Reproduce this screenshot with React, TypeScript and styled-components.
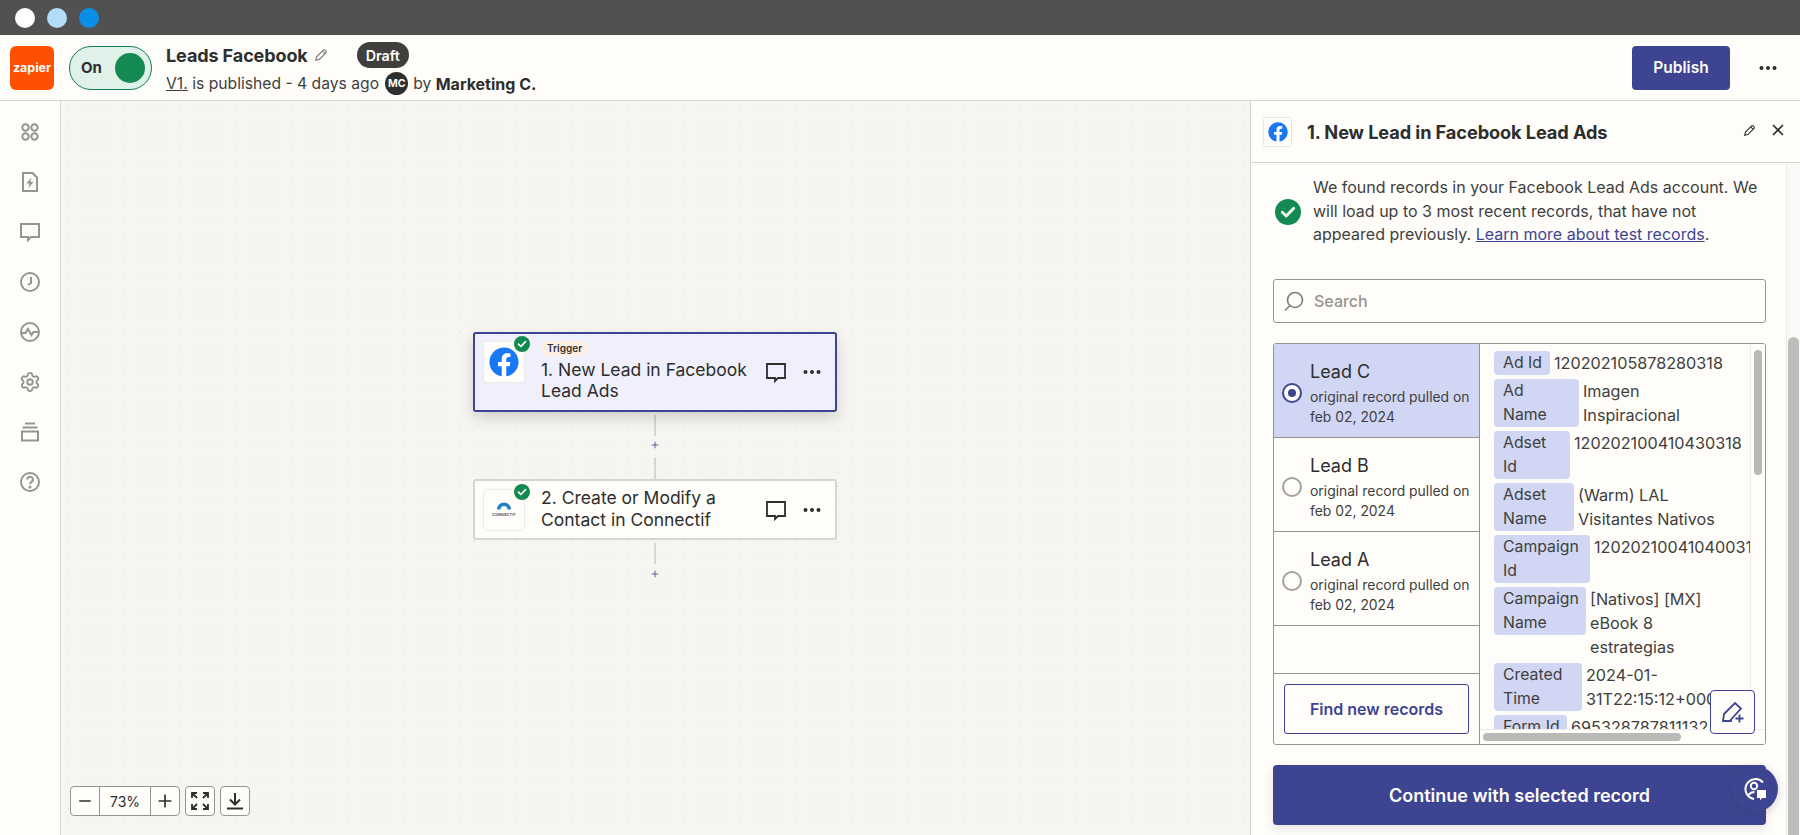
import styled, { createGlobalStyle } from "styled-components";
import { FaFacebook } from "react-icons/fa";
import { Minus, Plus, Settings, X } from "lucide-react";

const GlobalStyle = createGlobalStyle`
  html, body { margin: 0; padding: 0; height: 100%; }
  body { font-family: Inter, "Liberation Sans", sans-serif; color: #2d2e2e; background: #fffdf9; }
  * { box-sizing: border-box; }
`;

const navy = "#3d4592";
const lavender = "#d0d6f3";

const Page = styled.div`
  width: 100%;
  height: 100vh;
  display: flex;
  flex-direction: column;
  overflow: hidden;
`;

const TitleBar = styled.div`
  height: 35px;
  flex: none;
  background: #515151;
  display: flex;
  align-items: center;
  gap: 12px;
  padding-left: 15px;
`;

const WindowDot = styled.span<{ $color: string }>`
  width: 20px;
  height: 20px;
  border-radius: 50%;
  background: ${({ $color }) => $color};
`;

const Header = styled.header`
  height: 66px;
  flex: none;
  display: flex;
  align-items: center;
  padding: 0 22px 0 10px;
  background: #fffdf9;
  border-bottom: 1px solid #d6d5d0;
`;

const ZapierLogo = styled.div`
  width: 44px;
  height: 44px;
  border-radius: 6px;
  background: #ff4f00;
  color: #fffdf9;
  display: flex;
  align-items: center;
  justify-content: center;
  font-size: 12.5px;
  font-weight: 700;
`;

const Toggle = styled.div`
  width: 83px;
  height: 44px;
  margin-left: 15px;
  border-radius: 22px;
  border: 1px solid #13804d;
  background: #e0f1ea;
  display: flex;
  align-items: center;
  justify-content: space-between;
  padding: 0 6px 0 11px;
  font-size: 15px;
  font-weight: 700;
`;

const ToggleKnob = styled.span`
  width: 30px;
  height: 30px;
  border-radius: 50%;
  background: #138a50;
`;

const ZapInfo = styled.div`
  margin: 2px 0 0 14px;
  display: flex;
  flex-direction: column;
  gap: 4px;
`;

const ZapTitleRow = styled.div`
  display: flex;
  align-items: center;
  height: 26px;
`;

const ZapTitle = styled.h1`
  margin: 0;
  font-size: 18px;
  font-weight: 700;
  letter-spacing: -0.1px;
`;

const TitlePencil = styled.span`
  display: inline-flex;
  margin-left: 6px;
  color: #7c7b76;
`;

const DraftBadge = styled.span`
  margin-left: 29px;
  height: 26px;
  padding: 0 9px;
  display: inline-flex;
  align-items: center;
  border-radius: 13px;
  background: #403f3e;
  color: #fffdf9;
  font-size: 14.3px;
  font-weight: 600;
`;

const ZapMeta = styled.div`
  display: flex;
  align-items: center;
  font-size: 15.7px;
  color: #403f3e;
  white-space: pre;
`;

const VersionLink = styled.span`
  text-decoration: underline;
`;

const Avatar = styled.span`
  width: 23px;
  height: 23px;
  margin: 0 5px 0 6px;
  border-radius: 50%;
  background: #2d2e2e;
  color: #fffdf9;
  display: inline-flex;
  align-items: center;
  justify-content: center;
  font-size: 10.5px;
  font-weight: 700;
`;

const Author = styled.strong`
  font-size: 16px;
  font-weight: 700;
  color: #2d2e2e;
`;

const HeaderActions = styled.div`
  margin-left: auto;
  display: flex;
  align-items: center;
  gap: 28px;
`;

const PublishButton = styled.button`
  width: 98px;
  height: 44px;
  border: none;
  border-radius: 4px;
  background: ${navy};
  color: #fffdf9;
  font: 600 15.5px Inter, sans-serif;
`;

const Body = styled.div`
  flex: 1;
  min-height: 0;
  display: flex;
`;

const Sidebar = styled.nav`
  width: 61px;
  flex: none;
  border-right: 1px solid #d6d5d0;
  background: #fffdf9;
  display: flex;
  flex-direction: column;
  align-items: center;
  gap: 28px;
  padding-top: 20px;
  color: #95948f;
`;

const SideIcon = styled.span`
  width: 22px;
  height: 22px;
  display: flex;
`;

const Canvas = styled.main`
  flex: 1;
  position: relative;
  background-color: #f6f5f2;
  background-image: radial-gradient(#edece8 0.8px, transparent 0.9px);
  background-size: 14px 14px;
  display: flex;
  flex-direction: column;
  padding: 231px 0 0 412px;
`;

const NodeCard = styled.div<{ $active?: boolean }>`
  position: relative;
  width: 364px;
  height: ${({ $active }) => ($active ? "80px" : "61px")};
  display: flex;
  align-items: center;
  padding: 0 13px 0 8px;
  border-radius: 3px;
  border: 2px solid ${({ $active }) => ($active ? navy : "#d6d5d0")};
  background: ${({ $active }) => ($active ? "#eff0fb" : "#fffdf9")};
  box-shadow: ${({ $active }) => ($active ? "0 6px 14px rgba(45, 46, 46, 0.18)" : "none")};
`;

const AppBox = styled.div<{ $raised?: boolean }>`
  position: relative;
  width: 42px;
  height: 42px;
  flex: none;
  align-self: ${({ $raised }) => ($raised ? "flex-start" : "center")};
  margin-top: ${({ $raised }) => ($raised ? "7px" : "0")};
  border-radius: 4px;
  border: 1px solid #ecebe6;
  background: #fffdf9;
  display: flex;
  align-items: center;
  justify-content: center;
`;

const CheckBadge = styled.span`
  position: absolute;
  top: -6px;
  right: -6px;
  display: flex;
`;

const NodeText = styled.div`
  margin: 0 0 2px 16px;
  flex: 1;
  display: flex;
  flex-direction: column;
  align-items: flex-start;
`;

const TriggerTag = styled.span`
  height: 15px;
  padding: 0 6px;
  margin-bottom: 3px;
  border-radius: 8px;
  background: #fdf0e3;
  font-size: 10px;
  font-weight: 600;
  line-height: 15px;
`;

const NodeTitle = styled.div`
  font-size: 17.5px;
  line-height: 21.5px;
  color: #2d2e2e;
`;

const NodeActions = styled.div`
  display: flex;
  align-items: center;
  gap: 15px;
  color: #2d2e2e;
`;

const Connector = styled.div`
  width: 364px;
  height: 67px;
  display: flex;
  flex-direction: column;
  align-items: center;
  color: ${navy};
`;

const ConnectorLine = styled.span`
  width: 2px;
  height: 21px;
  margin-top: 3px;
  background: #d6d5d0;
`;

const ConnectorPlus = styled.span`
  height: 20px;
  display: flex;
  align-items: center;
  justify-content: center;
`;

const ZoomControls = styled.div`
  position: absolute;
  left: 9px;
  bottom: 19px;
  display: flex;
  gap: 5px;
`;

const ZoomGroup = styled.div`
  display: flex;
  height: 30px;
  border: 1px solid #95948f;
  border-radius: 4px;
  background: #fffdf9;
`;

const ZoomCell = styled.div<{ $width: number; $divided?: boolean }>`
  width: ${({ $width }) => $width}px;
  display: flex;
  align-items: center;
  justify-content: center;
  font-size: 14px;
  color: #2d2e2e;
  border-left: ${({ $divided }) => ($divided ? "1px solid #95948f" : "none")};
`;

const Panel = styled.aside`
  position: relative;
  width: 550px;
  flex: none;
  display: flex;
  flex-direction: column;
  background: #fffdf9;
  border-left: 1px solid #d6d5d0;
`;

const PanelHeader = styled.div`
  height: 62px;
  flex: none;
  display: flex;
  align-items: center;
  padding: 0 13px 0 12px;
  border-bottom: 1px solid #d6d5d0;
`;

const PanelAppBox = styled.div`
  width: 29px;
  height: 30px;
  border: 1px solid #e6e5e0;
  border-radius: 3px;
  display: flex;
  align-items: center;
  justify-content: center;
`;

const PanelTitle = styled.h2`
  margin: 0 0 0 15px;
  font-size: 18.2px;
  font-weight: 700;
  letter-spacing: -0.1px;
`;

const PanelHeaderActions = styled.div`
  margin: 0 0 3px auto;
  display: flex;
  align-items: center;
  gap: 13px;
`;

const PanelBody = styled.div`
  flex: 1;
  min-height: 0;
  padding: 12px 34px 0 22px;
`;

const Message = styled.div`
  display: flex;
  align-items: center;
  gap: 12px;
  padding: 1px 0 0 2px;
`;

const MessageText = styled.p`
  margin: 0;
  font-size: 16px;
  line-height: 23.7px;
  color: #403f3e;
  white-space: nowrap;
`;

const LearnLink = styled.a`
  color: ${navy};
  text-decoration: underline;
`;

const SearchBox = styled.div`
  height: 44px;
  margin-top: 32px;
  display: flex;
  align-items: center;
  gap: 8px;
  padding-left: 6px;
  border: 1px solid #95948f;
  border-radius: 3px;
  color: #95948f;
  font-size: 16px;
  font-weight: 500;
`;

const Records = styled.div`
  height: 402px;
  margin-top: 20px;
  display: grid;
  grid-template-columns: 206px 1fr;
  border: 1px solid #95948f;
  border-radius: 3px;
  overflow: hidden;
`;

const LeadColumn = styled.div`
  display: flex;
  flex-direction: column;
  border-right: 1px solid #95948f;
`;

const LeadRow = styled.div<{ $selected?: boolean }>`
  height: 94px;
  flex: none;
  display: flex;
  align-items: center;
  gap: 8px;
  padding: 0 8px;
  border-bottom: 1px solid #95948f;
  background: ${({ $selected }) => ($selected ? lavender : "transparent")};
`;

const Radio = styled.span<{ $selected?: boolean }>`
  width: 20px;
  height: 20px;
  flex: none;
  margin-top: 4px;
  border-radius: 50%;
  border: 2px solid ${({ $selected }) => ($selected ? navy : "#a3a29d")};
  background: #fffdf9;
  display: flex;
  align-items: center;
  justify-content: center;
  &::after {
    content: "";
    display: ${({ $selected }) => ($selected ? "block" : "none")};
    width: 8px;
    height: 8px;
    border-radius: 50%;
    background: ${navy};
  }
`;

const LeadText = styled.div`
  margin-top: 6px;
`;

const LeadName = styled.div`
  font-size: 18px;
  line-height: 24px;
  margin-bottom: 3px;
  color: #2d2e2e;
`;

const LeadNote = styled.div`
  font-size: 13.9px;
  line-height: 20px;
  color: #403f3e;
  white-space: nowrap;
`;

const EmptyRow = styled.div`
  height: 48px;
  flex: none;
  border-bottom: 1px solid #95948f;
`;

const FindRow = styled.div`
  flex: 1;
  display: flex;
  align-items: center;
  justify-content: center;
`;

const FindButton = styled.button`
  width: 185px;
  height: 50px;
  border: 1px solid ${navy};
  border-radius: 3px;
  background: transparent;
  color: ${navy};
  font: 600 16px Inter, sans-serif;
`;

const FieldsPane = styled.div`
  position: relative;
  overflow: hidden;
`;

const FieldList = styled.div`
  display: flex;
  flex-direction: column;
  gap: 4px;
  padding: 7px 0 0 14px;
  width: 400px;
`;

const FieldRow = styled.div`
  display: flex;
  align-items: flex-start;
  gap: 4px;
`;

const FieldKey = styled.div<{ $width: number }>`
  width: ${({ $width }) => $width}px;
  flex: none;
  padding: 0 9px;
  border-radius: 4px;
  background: ${lavender};
  font-size: 15.8px;
  line-height: 24px;
  color: #403f3e;
  white-space: nowrap;
`;

const FieldValue = styled.div`
  font-size: 16.2px;
  line-height: 24px;
  color: #403f3e;
  white-space: nowrap;
`;

const FieldLine = styled.div``;

const VerticalTrack = styled.div`
  position: absolute;
  top: 0;
  right: 0;
  bottom: 0;
  width: 15px;
  border-left: 1px solid #ecebe6;
  background: #fffdf9;
`;

const VerticalThumb = styled.div`
  position: absolute;
  top: 6px;
  left: 3px;
  width: 8px;
  height: 125px;
  border-radius: 4px;
  background: #b9b9b6;
`;

const HorizontalTrack = styled.div`
  position: absolute;
  left: 0;
  right: 0;
  bottom: 0;
  height: 15px;
  border-top: 1px solid #ecebe6;
  background: #fffdf9;
`;

const HorizontalThumb = styled.div`
  position: absolute;
  top: 3px;
  left: 3px;
  width: 198px;
  height: 8px;
  border-radius: 4px;
  background: #b9b9b6;
`;

const EditButton = styled.button`
  position: absolute;
  right: 10px;
  bottom: 10px;
  width: 45px;
  height: 44px;
  padding: 0;
  display: flex;
  align-items: center;
  justify-content: center;
  border: 1px solid ${navy};
  border-radius: 4px;
  background: #fffdf9;
  color: ${navy};
`;

const ContinueButton = styled.button`
  width: 100%;
  height: 60px;
  margin-top: 20px;
  border: none;
  border-radius: 4px;
  background: ${navy};
  color: #fffdf9;
  font: 600 18px Inter, sans-serif;
  box-shadow: 0 4px 10px rgba(45, 46, 46, 0.12);
`;

const PanelTrack = styled.div`
  position: absolute;
  top: 63px;
  right: 0;
  bottom: 0;
  width: 14px;
  background: #f9f9f7;
  border-left: 1px solid #ecebe6;
`;

const PanelThumb = styled.div`
  position: absolute;
  top: 173px;
  left: 1px;
  right: 1px;
  bottom: -20px;
  border-radius: 6px;
  background: #bdbdbb;
`;

const ChatBubble = styled.div`
  position: absolute;
  right: 22px;
  bottom: 23px;
  width: 46px;
  height: 46px;
  border-radius: 50%;
  background: ${navy};
  color: #fffdf9;
  display: flex;
  align-items: center;
  justify-content: center;
  box-shadow: 0 2px 8px rgba(45, 46, 46, 0.2);
`;

const Dots = ({ size = 20 }: { size?: number }) => (
  <svg width={size} height={size} viewBox="0 0 20 20" fill="currentColor">
    <circle cx="3.5" cy="10" r="2" />
    <circle cx="10" cy="10" r="2" />
    <circle cx="16.5" cy="10" r="2" />
  </svg>
);

const PencilIcon = ({ size = 14 }: { size?: number }) => (
  <svg width={size} height={size} viewBox="0 0 16 16" fill="none" stroke="currentColor" strokeWidth="1.3">
    <path d="M2 14l1-4 7.6-7.6a1.4 1.4 0 0 1 2 0l1 1a1.4 1.4 0 0 1 0 2L6 13z" />
    <path d="M9.5 3.5l3 3" />
  </svg>
);

const CommentIcon = ({ size = 22 }: { size?: number }) => (
  <svg width={size} height={size} viewBox="0 0 22 22" fill="none" stroke="currentColor" strokeWidth="1.8">
    <path d="M2 3h18v14h-7l-3 3v-3H2z" />
  </svg>
);

const GreenCheck = ({ size = 16 }: { size?: number }) => (
  <svg width={size} height={size} viewBox="0 0 16 16">
    <circle cx="8" cy="8" r="8" fill="#138a50" />
    <path d="M4.5 8.2l2.4 2.3 4.6-4.8" fill="none" stroke="#fffdf9" strokeWidth="1.7" strokeLinecap="round" strokeLinejoin="round" />
  </svg>
);

const ConnectifLogo = () => (
  <svg width="30" height="18" viewBox="0 0 30 18">
    <path d="M8 8.5a7 7 0 0 1 14 0h-3.5a3.5 3.5 0 0 0-7 0z" fill="#1d7fc4" />
    <text x="15" y="14.5" textAnchor="middle" fontSize="3.6" fontWeight="600" letterSpacing="0.3" fill="#2d3a55" fontFamily="Inter, sans-serif">
      CONNECTIF
    </text>
  </svg>
);

const sideIcons = [
  <g key="apps">
    <circle cx="6.5" cy="6.5" r="3.2" />
    <circle cx="15.5" cy="6.5" r="3.2" />
    <circle cx="6.5" cy="15.5" r="3.2" />
    <circle cx="15.5" cy="15.5" r="3.2" />
  </g>,
  <g key="file">
    <path d="M4 2h9.500L18 6.500V20H4z" />
    <path d="M12.500 6.500L7.500 12.500h3l-1 4.500 5-6h-3z" fill="currentColor" stroke="none" />
  </g>,
  <path key="comment" d="M2 3h18v13h-8l-3 3v-3H2z" />,
  <g key="clock">
    <circle cx="11" cy="11" r="9" />
    <path d="M12 6v6l-3 2" />
  </g>,
  <g key="activity">
    <circle cx="11" cy="11" r="9" />
    <path d="M2.500 12h4l2.500-4 3.500 6 2-3h5" />
  </g>,
  <g key="settings">
    <Settings x={0} y={0} width={22} height={22} strokeWidth={2} />
  </g>,
  <g key="stack">
    <path d="M6 2.500h10M3.500 6.500h15" />
    <path d="M3 10.500h16v9H3z" />
  </g>,
  <g key="help">
    <circle cx="11" cy="11" r="9" />
    <path d="M8.300 8.500a2.800 2.800 0 1 1 4.200 2.400c-1 .6-1.500 1.100-1.500 2.300" />
    <circle cx="11" cy="16" r="0.600" fill="currentColor" />
  </g>,
];

const leads = [
  { name: "Lead C", selected: true },
  { name: "Lead B", selected: false },
  { name: "Lead A", selected: false },
];

const fields = [
  { key: ["Ad Id"], width: 56, value: ["120202105878280318"] },
  { key: ["Ad", "Name"], width: 85, value: ["Imagen", "Inspiracional"] },
  { key: ["Adset", "Id"], width: 76, value: ["120202100410430318"] },
  { key: ["Adset", "Name"], width: 80, value: ["(Warm) LAL", "Visitantes Nativos"] },
  { key: ["Campaign", "Id"], width: 96, value: ["120202100410400318"] },
  { key: ["Campaign", "Name"], width: 92, value: ["[Nativos] [MX]", "eBook 8", "estrategias"] },
  { key: ["Created", "Time"], width: 88, value: ["2024-01-", "31T22:15:12+0000"] },
  { key: ["Form Id"], width: 73, value: ["695328787811132"] },
];

export default function App() {
  return (
    <Page>
      <GlobalStyle />
      <TitleBar>
        <WindowDot $color="#ffffff" />
        <WindowDot $color="#b3dcfa" />
        <WindowDot $color="#0a8fe8" />
      </TitleBar>
      <Header>
        <ZapierLogo>zapier</ZapierLogo>
        <Toggle>
          On
          <ToggleKnob />
        </Toggle>
        <ZapInfo>
          <ZapTitleRow>
            <ZapTitle>Leads Facebook</ZapTitle>
            <TitlePencil>
              <PencilIcon />
            </TitlePencil>
            <DraftBadge>Draft</DraftBadge>
          </ZapTitleRow>
          <ZapMeta>
            <VersionLink>V1.</VersionLink> is published - 4 days ago
            <Avatar>MC</Avatar>
            by <Author>Marketing C.</Author>
          </ZapMeta>
        </ZapInfo>
        <HeaderActions>
          <PublishButton>Publish</PublishButton>
          <Dots />
        </HeaderActions>
      </Header>
      <Body>
        <Sidebar>
          {sideIcons.map((icon, i) => (
            <SideIcon key={i}>
              <svg width="22" height="22" viewBox="0 0 22 22" fill="none" stroke="currentColor" strokeWidth="2">
                {icon}
              </svg>
            </SideIcon>
          ))}
        </Sidebar>
        <Canvas>
          <NodeCard $active>
            <AppBox $raised>
              <FaFacebook size={30} color="#1877f2" />
              <CheckBadge>
                <GreenCheck />
              </CheckBadge>
            </AppBox>
            <NodeText>
              <TriggerTag>Trigger</TriggerTag>
              <NodeTitle>
                1. New Lead in Facebook
                <br />
                Lead Ads
              </NodeTitle>
            </NodeText>
            <NodeActions>
              <CommentIcon />
              <Dots />
            </NodeActions>
          </NodeCard>
          <Connector>
            <ConnectorLine />
            <ConnectorPlus>
              <Plus size={10} />
            </ConnectorPlus>
            <ConnectorLine />
          </Connector>
          <NodeCard>
            <AppBox>
              <ConnectifLogo />
              <CheckBadge>
                <GreenCheck />
              </CheckBadge>
            </AppBox>
            <NodeText>
              <NodeTitle>
                2. Create or Modify a
                <br />
                Contact in Connectif
              </NodeTitle>
            </NodeText>
            <NodeActions>
              <CommentIcon />
              <Dots />
            </NodeActions>
          </NodeCard>
          <Connector>
            <ConnectorLine />
            <ConnectorPlus>
              <Plus size={10} />
            </ConnectorPlus>
          </Connector>
          <ZoomControls>
            <ZoomGroup>
              <ZoomCell $width={28}>
                <Minus size={18} />
              </ZoomCell>
              <ZoomCell $width={51} $divided>
                73%
              </ZoomCell>
              <ZoomCell $width={29} $divided>
                <Plus size={20} />
              </ZoomCell>
            </ZoomGroup>
            <ZoomGroup>
              <ZoomCell $width={28}>
                <svg width="20" height="20" viewBox="0 0 20 20" fill="none" stroke="currentColor" strokeWidth="1.8">
                  <path d="M2 7V2h5M2 2l5 5M18 7V2h-5M18 2l-5 5M2 13v5h5M2 18l5-5M18 13v5h-5M18 18l-5-5" />
                </svg>
              </ZoomCell>
            </ZoomGroup>
            <ZoomGroup>
              <ZoomCell $width={28}>
                <svg width="20" height="20" viewBox="0 0 20 20" fill="none" stroke="currentColor" strokeWidth="2">
                  <path d="M10 2v11M5 8.500l5 5 5-5M2 17.500h16" />
                </svg>
              </ZoomCell>
            </ZoomGroup>
          </ZoomControls>
        </Canvas>
        <Panel>
          <PanelHeader>
            <PanelAppBox>
              <FaFacebook size={20} color="#1877f2" />
            </PanelAppBox>
            <PanelTitle>1. New Lead in Facebook Lead Ads</PanelTitle>
            <PanelHeaderActions>
              <PencilIcon size={13} />
              <X size={18} strokeWidth={2.2} />
            </PanelHeaderActions>
          </PanelHeader>
          <PanelBody>
            <Message>
              <GreenCheck size={26} />
              <MessageText>
                We found records in your Facebook Lead Ads account. We
                <br />
                will load up to 3 most recent records, that have not
                <br />
                appeared previously. <LearnLink>Learn more about test records</LearnLink>.
              </MessageText>
            </Message>
            <SearchBox>
              <svg width="26" height="26" viewBox="0 0 26 26" fill="none" stroke="#7c7b76" strokeWidth="1.6">
                <circle cx="15" cy="12" r="7.500" />
                <path d="M9.500 18L5 22.500" />
              </svg>
              Search
            </SearchBox>
            <Records>
              <LeadColumn>
                {leads.map((lead) => (
                  <LeadRow key={lead.name} $selected={lead.selected}>
                    <Radio $selected={lead.selected} />
                    <LeadText>
                      <LeadName>{lead.name}</LeadName>
                      <LeadNote>
                        original record pulled on
                        <br />
                        feb 02, 2024
                      </LeadNote>
                    </LeadText>
                  </LeadRow>
                ))}
                <EmptyRow />
                <FindRow>
                  <FindButton>Find new records</FindButton>
                </FindRow>
              </LeadColumn>
              <FieldsPane>
                <FieldList>
                  {fields.map((field) => (
                    <FieldRow key={field.key.join(" ")}>
                      <FieldKey $width={field.width}>
                        {field.key.map((line) => (
                          <FieldLine key={line}>{line}</FieldLine>
                        ))}
                      </FieldKey>
                      <FieldValue>
                        {field.value.map((line) => (
                          <FieldLine key={line}>{line}</FieldLine>
                        ))}
                      </FieldValue>
                    </FieldRow>
                  ))}
                </FieldList>
                <VerticalTrack>
                  <VerticalThumb />
                </VerticalTrack>
                <HorizontalTrack>
                  <HorizontalThumb />
                </HorizontalTrack>
                <EditButton>
                  <svg width="26" height="26" viewBox="0 0 26 26" fill="none" stroke="currentColor" strokeWidth="1.800">
                    <path d="M3 22l1-7L15 4l6 5.500L11 20.500V22z" />
                    <path d="M19.500 15.500v8M15.500 19.500h8" />
                  </svg>
                </EditButton>
              </FieldsPane>
            </Records>
            <ContinueButton>Continue with selected record</ContinueButton>
          </PanelBody>
          <PanelTrack>
            <PanelThumb />
          </PanelTrack>
          <ChatBubble>
            <svg width="28" height="28" viewBox="0 0 28 28" fill="none" stroke="currentColor" strokeWidth="2">
              <path d="M22 7.500A10 10 0 1 0 13 24" />
              <circle cx="13" cy="11" r="3.200" />
              <path d="M7.500 20c1.500-2 3.500-3 6-3" />
              <path d="M16 15h9v8h-4l-2 2.500V23h-3z" fill="currentColor" stroke="none" />
            </svg>
          </ChatBubble>
        </Panel>
      </Body>
    </Page>
  );
}
